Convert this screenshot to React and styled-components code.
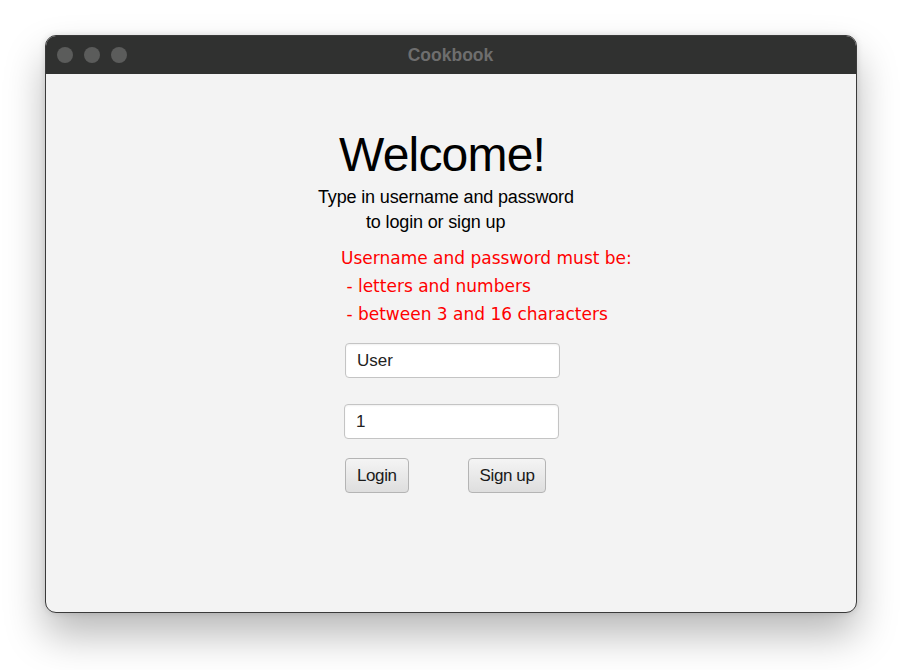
import styled, { createGlobalStyle } from 'styled-components';

const GlobalStyle = createGlobalStyle`
  html, body {
    margin: 0;
    padding: 0;
    background: #ffffff;
  }
`;

const App = () => {
  return (
    <>
      <GlobalStyle />
      <Page>
        <Window>
          <TitleBar>
            <Lights>
              <Light />
              <Light />
              <Light />
            </Lights>
            <Title>Cookbook</Title>
          </TitleBar>
          <Content>
            <Heading>Welcome!</Heading>
            <Sub>Type in username and password</Sub>
            <Sub $indent={48}>to login or sign up</Sub>
            <Rules>
              <p>Username and password must be:</p>
              <p> - letters and numbers</p>
              <p> - between 3 and 16 characters</p>
            </Rules>
            <Field defaultValue="User" $top={15} $left={27} />
            <Field defaultValue="1" $top={26} $left={26} />
            <Buttons>
              <Btn>Login</Btn>
              <Btn>Sign up</Btn>
            </Buttons>
          </Content>
        </Window>
      </Page>
    </>
  );
};

const Page = styled.div`
  width: 904px;
  height: 670px;
  padding: 35px 0 0 45px;
  box-sizing: border-box;
`;

const Window = styled.div`
  width: 812px;
  height: 578px;
  box-sizing: border-box;
  border: 1px solid #3a3a3a;
  border-radius: 11px;
  overflow: hidden;
  background: #f3f3f3;
  display: flex;
  flex-direction: column;
  box-shadow: 0 22px 40px rgba(0, 0, 0, 0.28), 0 0 6px rgba(0, 0, 0, 0.12);
`;

const TitleBar = styled.div`
  height: 38px;
  flex-shrink: 0;
  background: #303130;
  display: flex;
  align-items: center;
  padding-left: 11px;
`;

const Lights = styled.div`
  display: flex;
  gap: 11px;
`;

const Light = styled.span`
  width: 16px;
  height: 16px;
  border-radius: 50%;
  background: #5b5c5b;
`;

const Title = styled.div`
  flex: 1;
  text-align: center;
  margin-right: 82px;
  font-family: 'Liberation Sans', Arial, sans-serif;
  font-weight: 700;
  font-size: 17.5px;
  color: #6e6e6e;
`;

const Content = styled.div`
  flex: 1;
  display: flex;
  flex-direction: column;
  align-items: flex-start;
  padding: 50px 0 0 272px;
  font-family: 'Liberation Sans', Arial, sans-serif;
  color: #000;
`;

const Heading = styled.h1`
  margin: 0 0 0 21px;
  font-size: 48px;
  font-weight: 400;
  line-height: 61px;
  letter-spacing: -0.8px;
`;

const Sub = styled.div`
  margin-left: ${(p) => p.$indent || 0}px;
  font-size: 18px;
  line-height: 25px;
  letter-spacing: -0.15px;
`;

const Rules = styled.div`
  margin: 9px 0 0 23px;
  font-family: 'Comic Sans MS', 'DejaVu Sans', sans-serif;
  font-size: 17px;
  color: #ff0000;
  > p {
    margin: 0;
    line-height: 28px;
    white-space: pre;
  }
`;

const Field = styled.input`
  margin: ${(p) => p.$top}px 0 0 ${(p) => p.$left}px;
  width: 215px;
  height: 35px;
  box-sizing: border-box;
  border: 1px solid #c4c4c4;
  border-radius: 4px;
  background: #fff;
  padding: 0 11px;
  font-family: 'Liberation Sans', Arial, sans-serif;
  font-size: 17px;
  color: #222;
  outline: none;
  box-shadow: inset 0 1px 2px rgba(0, 0, 0, 0.06);
`;

const Buttons = styled.div`
  display: flex;
  gap: 59px;
  margin: 19px 0 0 27px;
`;

const Btn = styled.button`
  height: 35px;
  padding: 0 11px;
  border: 1px solid #b4b4b4;
  border-radius: 4px;
  background: linear-gradient(#f4f4f4, #dedede);
  font-family: 'Liberation Sans', Arial, sans-serif;
  font-size: 17px;
  letter-spacing: -0.4px;
  color: #1a1a1a;
`;

export default App;
